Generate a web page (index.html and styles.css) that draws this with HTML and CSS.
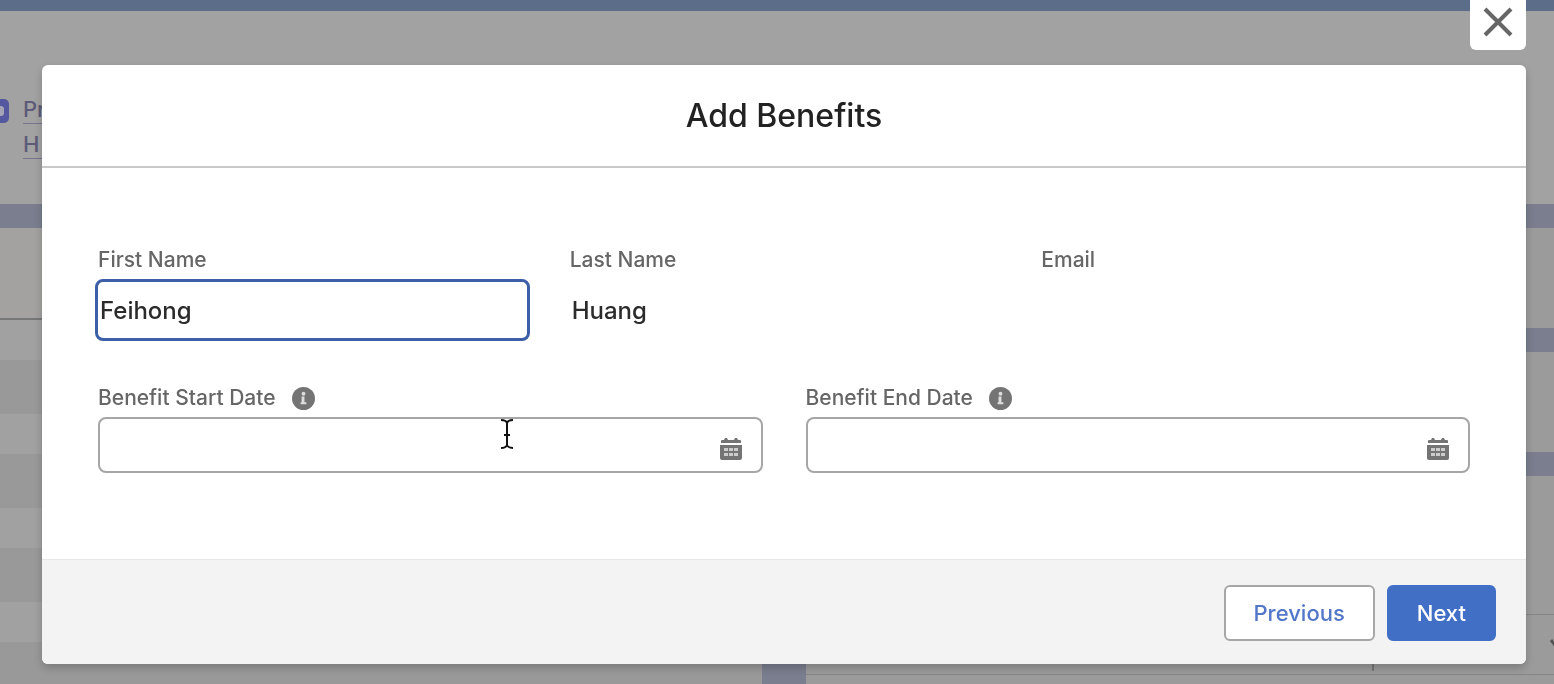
FILE: index.html
```
<!DOCTYPE html>
<html lang="en">
<head>
    <meta charset="UTF-8">
    <meta name="viewport" content="width=device-width, initial-scale=1.0">
    <title>Add Benefits</title>
    <link rel="stylesheet" href="styles.css">
</head>
<body>
    <div class="page">
        <div class="top-bar"></div>
        <div class="record-header">
            <svg class="record-icon" width="24" height="24" viewBox="0 0 24 24">
                <rect width="24" height="24" rx="5" fill="#5458a0"/>
                <rect x="10" y="7" width="9" height="10" rx="3" fill="#a4a4b4"/>
            </svg>
            <div class="record-links">
                <a href="#">Pr</a>
                <a href="#">H</a>
            </div>
        </div>
        <div class="columns">
            <div class="main-column">
                <div class="list-header"></div>
                <div class="list-rows"></div>
            </div>
            <div class="side-column">
                <div class="card"></div>
                <div class="card"></div>
                <div class="card card-tall">
                    <div class="card-toolbar">
                        <span class="divider"></span>
                        <svg width="20" height="20" viewBox="0 0 20 20">
                            <path d="M3 5l7 9 7-9" fill="none" stroke="#555" stroke-width="3"/>
                        </svg>
                    </div>
                </div>
            </div>
        </div>
    </div>

    <div class="overlay">
        <button class="close-btn" type="button" aria-label="Close">
            <svg width="32" height="32" viewBox="0 0 32 32">
                <path d="M3 3l26 26M29 3L3 29" stroke="#666" stroke-width="4"/>
            </svg>
        </button>

        <form class="modal" role="dialog" aria-labelledby="modal-title">
            <div class="modal-header">
                <h1 class="title" id="modal-title">Add Benefits</h1>
            </div>

            <div class="modal-body">
                <div class="row row-names">
                    <div class="field">
                        <label for="first-name">First Name</label>
                        <input class="text-input focused" id="first-name" type="text" value="Feihong">
                    </div>
                    <div class="field">
                        <label for="last-name">Last Name</label>
                        <input class="text-input" id="last-name" type="text" value="Huang">
                    </div>
                    <div class="field">
                        <label for="email">Email</label>
                        <input class="text-input" id="email" type="email">
                    </div>
                </div>

                <div class="row row-dates">
                    <div class="field">
                        <div class="label-line">
                            <label for="start-date">Benefit Start Date</label>
                            <button class="info-btn" type="button" aria-label="Start date help">
                                <svg width="23" height="23" viewBox="0 0 24 24">
                                    <circle cx="12" cy="12" r="12" fill="#747474"/>
                                    <circle cx="12" cy="7" r="2" fill="#ddd"/>
                                    <path d="M10 10h3v6h2v2H9v-2h1z" fill="#ddd"/>
                                </svg>
                            </button>
                        </div>
                        <div class="date-box">
                            <input class="date-input" id="start-date" type="text">
                            <button class="calendar-btn" type="button" aria-label="Pick start date">
                                <svg width="22" height="23" viewBox="0 0 22 23">
                                    <path d="M1 6V4q0-1 1-1h2l1-2h2l1 2h6l1-2h2l1 2h2q1 0 1 1v2z" fill="#747474"/>
                                    <path d="M0 8h22v13q0 2-2 2H2q-2 0-2-2z" fill="#747474"/>
                                    <path d="M4 11h4v3H4zM9 11h4v3H9zM14 11h4v3h-4zM4 16h4v3H4zM9 16h4v3H9zM14 16h4v3h-4z" fill="#ccc"/>
                                </svg>
                            </button>
                            <svg class="pointer" width="14" height="30" viewBox="0 0 14 30">
                                <path d="M1 1q5 0 6 3q1-3 6-3M7 4v22M1 29q5 0 6-3q1 3 6 3M4 16h6" fill="none" stroke="#111" stroke-width="2"/>
                            </svg>
                        </div>
                    </div>
                    <div class="field">
                        <div class="label-line">
                            <label for="end-date">Benefit End Date</label>
                            <button class="info-btn" type="button" aria-label="End date help">
                                <svg width="23" height="23" viewBox="0 0 24 24">
                                    <circle cx="12" cy="12" r="12" fill="#747474"/>
                                    <circle cx="12" cy="7" r="2" fill="#ddd"/>
                                    <path d="M10 10h3v6h2v2H9v-2h1z" fill="#ddd"/>
                                </svg>
                            </button>
                        </div>
                        <div class="date-box">
                            <input class="date-input" id="end-date" type="text">
                            <button class="calendar-btn" type="button" aria-label="Pick end date">
                                <svg width="22" height="23" viewBox="0 0 22 23">
                                    <path d="M1 6V4q0-1 1-1h2l1-2h2l1 2h6l1-2h2l1 2h2q1 0 1 1v2z" fill="#747474"/>
                                    <path d="M0 8h22v13q0 2-2 2H2q-2 0-2-2z" fill="#747474"/>
                                    <path d="M4 11h4v3H4zM9 11h4v3H9zM14 11h4v3h-4zM4 16h4v3H4zM9 16h4v3H9zM14 16h4v3h-4z" fill="#ccc"/>
                                </svg>
                            </button>
                        </div>
                    </div>
                </div>
            </div>

            <div class="modal-footer">
                <button class="btn btn-neutral" type="button">Previous</button>
                <button class="btn btn-brand" type="submit">Next</button>
            </div>
        </form>
    </div>
</body>
</html>
```
FILE: styles.css
```
* {
    box-sizing: border-box;
}

body {
    margin: 0;
    font-family: Inter, "Liberation Sans", sans-serif;
    color: #222;
    background: #7b7e8e;
}

input,
button {
    font-family: inherit;
    font-weight: 500;
}

svg {
    display: block;
}

/* Dimmed record page */
.page {
    height: 100vh;
    overflow: hidden;
    display: flex;
    flex-direction: column;
}

.top-bar {
    flex: none;
    height: 11px;
    background: #5c6d8a;
}

.record-header {
    flex: none;
    display: flex;
    gap: 14px;
    height: 193px;
    padding-top: 84px;
    background: #a3a2a2;
}

.record-icon {
    margin: 4px 0 0 -15px;
}

.record-links {
    display: flex;
    flex-direction: column;
    gap: 6px;
}

.record-links a {
    min-width: 24px;
    line-height: 28px;
    font-size: 22px;
    font-weight: 500;
    color: #5d5b78;
    text-decoration: none;
    border-bottom: 1px solid #77758a;
}

.columns {
    flex: 1;
    display: grid;
    grid-template-columns: 762fr 748fr;
    gap: 44px;
    padding-top: 24px;
}

.main-column {
    display: flex;
    flex-direction: column;
}

.list-header {
    height: 92px;
    background: #a3a2a0;
    border-bottom: 2px solid #777;
}

.list-rows {
    flex: 1;
    background: repeating-linear-gradient(#a1a1a1 0 40px, #999 40px 94px);
}

.side-column {
    display: flex;
    flex-direction: column;
    gap: 24px;
}

.card {
    height: 100px;
    background: #9b9b9b;
}

.card-tall {
    flex: 1;
    padding-top: 138px;
}

.card-toolbar {
    display: flex;
    justify-content: flex-end;
    align-items: center;
    height: 61px;
    margin-right: -14px;
    border: solid #858585;
    border-width: 1px 0;
}

.divider {
    height: 52px;
    margin-right: 174px;
    border-left: 2px solid #777;
}

/* Modal */
.overlay {
    position: fixed;
    inset: 0;
    display: flex;
    flex-direction: column;
    padding: 0 28px 0 42px;
}

.close-btn {
    align-self: flex-end;
    display: flex;
    justify-content: center;
    align-items: center;
    width: 56px;
    height: 50px;
    padding: 0 0 6px;
    border: none;
    border-radius: 0 0 6px 6px;
    background: #fff;
    cursor: pointer;
}

.modal {
    margin-top: 15px;
    border-radius: 6px;
    overflow: hidden;
    background: #fff;
    box-shadow: 0 4px 8px rgba(0, 0, 0, 0.2);
}

.modal-header {
    padding: 30px 32px 29px;
    border-bottom: 2px solid #c9c9c9;
    text-align: center;
}

.title {
    margin: 0;
    font-size: 32px;
    font-weight: 500;
    line-height: 42px;
}

.modal-body {
    display: flex;
    flex-direction: column;
    gap: 43px;
    padding: 78px 56px 86px;
}

.row {
    display: grid;
    gap: 43px;
}

.row-names {
    grid-template-columns: repeat(3, 1fr);
}

.row-dates {
    grid-template-columns: repeat(2, 1fr);
}

.field {
    display: flex;
    flex-direction: column;
    gap: 5px;
}

.label-line {
    display: flex;
    align-items: center;
    gap: 16px;
}

label {
    font-size: 21px;
    font-weight: 500;
    line-height: 28px;
    color: #666;
}

.text-input {
    height: 62px;
    margin: 0 -3px;
    padding: 0 2px;
    border: 3px solid transparent;
    border-radius: 8px;
    outline: none;
    font-size: 24px;
    color: #2b2b2b;
    background: #fff;
}

.focused {
    border-color: #3c5fa8;
}

.info-btn,
.calendar-btn {
    padding: 0;
    border: none;
    background: none;
    cursor: pointer;
}

.date-box {
    position: relative;
    display: flex;
    align-items: center;
    height: 56px;
    padding-right: 19px;
    border: 2px solid #a6a6a6;
    border-radius: 8px;
}

.date-input {
    flex: 1;
    min-width: 0;
    height: 100%;
    border: none;
    outline: none;
    font-size: 24px;
    background: none;
}

.calendar-btn {
    padding-top: 6px;
}

/* Text cursor resting over the field */
.pointer {
    position: absolute;
    top: 0;
    left: 60.5%;
}

.modal-footer {
    display: flex;
    justify-content: flex-end;
    gap: 12px;
    padding: 25px 30px 23px;
    background: #f3f3f3;
    border-top: 1px solid #e8e8e8;
}

.btn {
    height: 56px;
    padding: 0 28px;
    border: 2px solid #a6a6a6;
    border-radius: 6px;
    font-size: 22px;
    cursor: pointer;
}

.btn-neutral {
    color: #5277c8;
    background: #fff;
}

.btn-brand {
    color: #fff;
    border-color: #416fc5;
    background: #416fc5;
}
```
